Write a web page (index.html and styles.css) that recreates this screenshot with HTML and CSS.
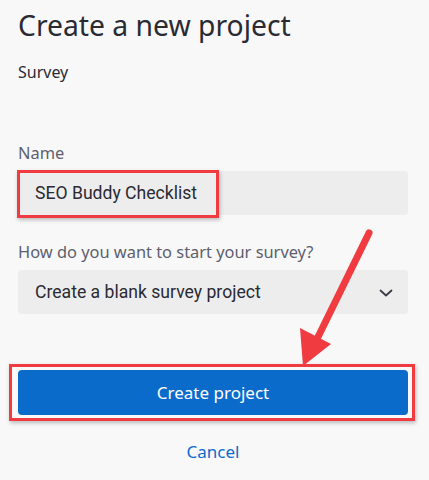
FILE: index.html
```html
<!DOCTYPE html>
<html lang="en">
<head>
<meta charset="utf-8">
<link rel="stylesheet" href="styles.css">
</head>
<body>
<main class="dialog">
  <h1 class="title">Create a new project</h1>
  <p class="subtitle">Survey</p>

  <label class="label label-name">Name</label>
  <div class="field">
    <span class="field-text highlight-small">SEO Buddy Checklist</span>
  </div>

  <label class="label label-start">How do you want to start your survey?</label>
  <div class="field select">
    <span class="field-text">Create a blank survey project</span>
    <svg class="chevron" width="14" height="8" viewBox="0 0 14 8"><path d="M1.5 1.5 L7 6.5 L12.5 1.5" fill="none" stroke="#3a3a44" stroke-width="1.8" stroke-linecap="round" stroke-linejoin="round"/></svg>
  </div>

  <div class="button-wrap">
    <button class="primary">Create project</button>
  </div>

  <a class="cancel">Cancel</a>
</main>

<svg class="arrow" width="429" height="480" viewBox="0 0 429 480">
  <line x1="369" y1="233" x2="318" y2="337" stroke="#f03b40" stroke-width="7" stroke-linecap="round"/>
  <polygon points="303,366 300,328 331,344" fill="#f03b40"/>
</svg>
</body>
</html>
```

FILE: styles.css
```css
* { box-sizing: border-box; }
html, body { margin: 0; padding: 0; }
body {
  background: #f8f8f8;
  font-family: "Noto Sans", "Open Sans", sans-serif;
  color: #2a2a33;
  width: 429px;
  height: 480px;
  overflow: hidden;
  position: relative;
}
.dialog {
  padding: 7px 21px 0 18px;
  display: flex;
  flex-direction: column;
}
.title {
  margin: 0;
  font-size: 28.3px;
  font-weight: 400;
  line-height: 36px;
  color: #2a2a33;
}
.subtitle {
  margin: 17px 0 0 0;
  font-size: 16px;
  line-height: 24px;
  color: #2a2a33;
}
.label {
  display: block;
  font-size: 16.4px;
  line-height: 24px;
  color: #5c5f6e;
}
.label-name { margin-top: 57px; }
.label-start { margin-top: 25px; }
.field {
  margin-top: 6px;
  height: 44px;
  background: #ededed;
  border-radius: 4px;
  display: flex;
  align-items: center;
  position: relative;
}
.field-text {
  font-family: Roboto, "Noto Sans", sans-serif;
  font-size: 17.6px;
  color: #2a2a33;
  padding-left: 17px;
}
.highlight-small {
  position: relative;
}
.highlight-small::after {
  content: "";
  position: absolute;
  left: -1px;
  top: -13px;
  width: 196px;
  height: 42px;
  border: 3px solid #f03b40;
  box-shadow: 1px 2px 4px rgba(0,0,0,0.25);
}
.select { justify-content: space-between; padding-right: 15px; }
.chevron { display: block; margin-top: 1px; }
.button-wrap {
  margin-top: 56px;
  position: relative;
}
.button-wrap::after {
  content: "";
  position: absolute;
  left: -9px;
  top: -6px;
  right: -7px;
  bottom: -6px;
  border: 3px solid #f03b40;
  box-shadow: 1px 2px 4px rgba(0,0,0,0.25);
  pointer-events: none;
}
.primary {
  display: block;
  width: 100%;
  height: 45px;
  border: 0;
  border-radius: 4px;
  background: #0b6bcb;
  color: #ffffff;
  font-family: "Noto Sans", "Open Sans", sans-serif;
  font-size: 17px;
  padding: 0;
}
.cancel {
  margin-top: 25px;
  align-self: center;
  font-size: 17px;
  line-height: 24px;
  color: #0b6bcb;
}
.arrow {
  position: absolute;
  left: 0;
  top: 0;
  pointer-events: none;
}
```
